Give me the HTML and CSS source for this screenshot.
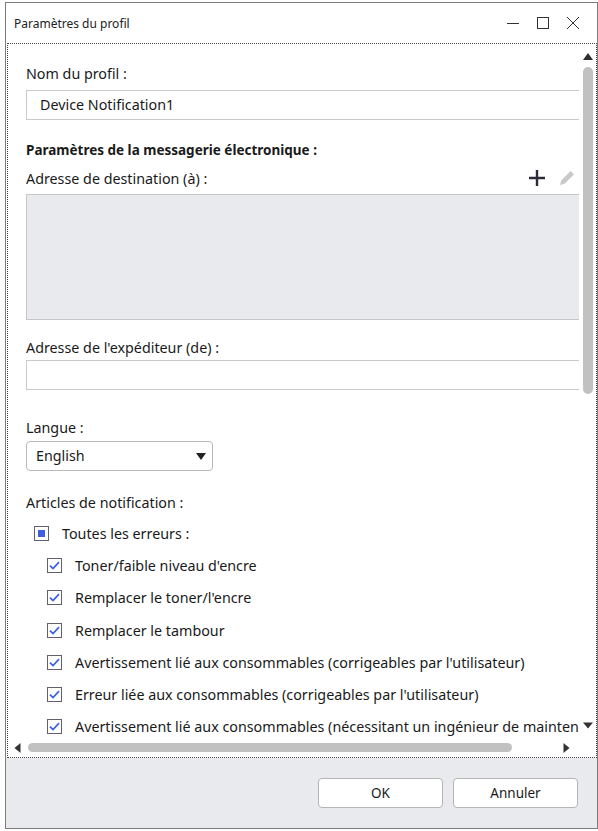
FILE: index.html
```html
<!DOCTYPE html>
<html lang="fr">

<head>
	<title>Paramètres du profil</title>
	<meta charset="utf-8" />
	<meta name="viewport" content="width=device-width, initial-scale=1">
	<link rel="stylesheet" href="styles.css">
</head>

<body>
	<div class="window">
		<div class="titlebar">
			<span class="title">Paramètres du profil</span>
			<div class="caption">
				<span class="cap-btn"><svg width="14" height="14" viewBox="0 0 14 14"><path d="M1 7.5h12" stroke="#333" stroke-width="1"/></svg></span>
				<span class="cap-btn"><svg width="14" height="14" viewBox="0 0 14 14"><rect x="1.5" y="1.5" width="11" height="11" fill="none" stroke="#333" stroke-width="1"/></svg></span>
				<span class="cap-btn"><svg width="14" height="14" viewBox="0 0 14 14"><path d="M1 1l12 12M13 1L1 13" stroke="#333" stroke-width="1"/></svg></span>
			</div>
		</div>

		<div class="panel">
			<div class="viewport">
				<div class="content">
					<div class="lbl">Nom du profil :</div>
					<div class="textbox">Device Notification1</div>

					<div class="section">Paramètres de la messagerie électronique :</div>
					<div class="list-head">
						<span>Adresse de destination (à) :</span>
						<span class="tools">
							<svg class="tool" width="18" height="18" viewBox="0 0 18 18"><path d="M9 1v16M1 9h16" stroke="#2c2c38" stroke-width="2.4"/></svg>
							<svg class="tool" width="18" height="18" viewBox="0 0 18 18"><path d="M2 16l1.2-4.6L12.6 2l3.4 3.4-9.4 9.4z" fill="#c9c9cc"/></svg>
						</span>
					</div>
					<div class="listbox"></div>

					<div class="lbl gap-l">Adresse de l'expéditeur (de) :</div>
					<div class="textbox tight"></div>

					<div class="lbl gap-xl">Langue :</div>
					<div class="combo">English<span class="combo-arrow"></span></div>

					<div class="lbl gap-m">Articles de notification :</div>
					<ul class="checklist">
						<li class="parent"><span class="check partial"></span>Toutes les erreurs :</li>
						<li><span class="check"><svg width="15" height="15" viewBox="0 0 15 15"><path d="M3 7.6l3 3 6-6.4" fill="none" stroke="#3d5ee0" stroke-width="1.7"/></svg></span>Toner/faible niveau d'encre</li>
						<li><span class="check"><svg width="15" height="15" viewBox="0 0 15 15"><path d="M3 7.6l3 3 6-6.4" fill="none" stroke="#3d5ee0" stroke-width="1.7"/></svg></span>Remplacer le toner/l'encre</li>
						<li><span class="check"><svg width="15" height="15" viewBox="0 0 15 15"><path d="M3 7.6l3 3 6-6.4" fill="none" stroke="#3d5ee0" stroke-width="1.7"/></svg></span>Remplacer le tambour</li>
						<li><span class="check"><svg width="15" height="15" viewBox="0 0 15 15"><path d="M3 7.6l3 3 6-6.4" fill="none" stroke="#3d5ee0" stroke-width="1.7"/></svg></span>Avertissement lié aux consommables (corrigeables par l'utilisateur)</li>
						<li><span class="check"><svg width="15" height="15" viewBox="0 0 15 15"><path d="M3 7.6l3 3 6-6.4" fill="none" stroke="#3d5ee0" stroke-width="1.7"/></svg></span>Erreur liée aux consommables (corrigeables par l'utilisateur)</li>
						<li><span class="check"><svg width="15" height="15" viewBox="0 0 15 15"><path d="M3 7.6l3 3 6-6.4" fill="none" stroke="#3d5ee0" stroke-width="1.7"/></svg></span>Avertissement lié aux consommables (nécessitant un ingénieur de maintenance)</li>
					</ul>
				</div>
			</div>

			<!-- scrollbars -->
			<div class="vscroll">
				<span class="tri-up"></span>
				<span class="vthumb"></span>
				<svg class="arrow down" width="10" height="7" viewBox="0 0 10 7"><path d="M0 0.5L5 6.5 10 0.5z" fill="#333"/></svg>
			</div>
			<div class="hscroll">
				<svg class="arrow" width="7" height="10" viewBox="0 0 7 10"><path d="M6.5 0L0.5 5 6.5 10z" fill="#333"/></svg>
				<span class="hthumb"></span>
				<svg class="arrow right" width="7" height="10" viewBox="0 0 7 10"><path d="M0.5 0L6.5 5 0.5 10z" fill="#333"/></svg>
			</div>
			<div class="corner"></div>
		</div>

		<div class="footer">
			<button class="btn">OK</button>
			<button class="btn">Annuler</button>
		</div>
	</div>
</body>

</html>
```

FILE: styles.css
```css
* {
	box-sizing: border-box
}

body,
html {
	margin: 0;
	background-color: white;
	font-family: "Noto Sans", "Open Sans", sans-serif;
	font-size: 14.3px;
	color: #1a1a1a;
}

.window {
	margin: 2px 0 0 5px;
	width: 593px;
	height: 827px;
	border: 1px solid #7c7c7c;
	display: flex;
	flex-direction: column;
}

/* Title bar */
.titlebar {
	height: 40px;
	flex: none;
	display: flex;
	align-items: center;
	padding-left: 8px;
	padding-right: 9px;
}

.title {
	flex: 1;
	font-size: 12px;
	color: #222;
}

.caption {
	display: flex;
}

.cap-btn {
	width: 30px;
	height: 30px;
	display: flex;
	align-items: center;
	justify-content: center;
}

/* Main panel with dotted focus rectangle */
.panel {
	height: 715px;
	flex: none;
	margin-left: 1px;
	border: 1px dotted #444;
	display: grid;
	grid-template-columns: 571px 17px;
	grid-template-rows: 694px 19px;
}

.viewport {
	overflow: hidden;
	min-width: 0;
}

.content {
	width: 571px;
	padding: 20px 0 0 18px;
}

.lbl {
	line-height: 20px;
}

.gap-l {
	margin-top: 18px;
}

.gap-xl {
	margin-top: 28px;
}

.gap-m {
	margin-top: 22px;
}

.textbox {
	width: 570px;
	height: 30px;
	margin-top: 6px;
	border: 1px solid #c9c9c9;
	padding-left: 13px;
	line-height: 28px;
}

.textbox.tight {
	margin-top: 2px;
}

.section {
	margin-top: 20px;
	line-height: 20px;
	font-size: 13.5px;
	font-weight: bold;
}

.list-head {
	margin-top: 8px;
	height: 20px;
	display: flex;
	align-items: center;
	justify-content: space-between;
	padding-right: 3px;
}

.tools {
	display: flex;
	gap: 12px;
}

.tool {
	display: block;
}

.listbox {
	width: 570px;
	height: 126px;
	margin-top: 6px;
	border: 1px solid #c6c6c6;
	background-color: #e9eaee;
}

.combo {
	position: relative;
	width: 187px;
	height: 30px;
	margin-top: 3px;
	border: 1px solid #b9b9b9;
	border-radius: 4px;
	padding-left: 9px;
	line-height: 28px;
}

.combo-arrow {
	position: absolute;
	right: 6px;
	top: 11px;
	border-left: 5.5px solid transparent;
	border-right: 5.5px solid transparent;
	border-top: 7px solid #222;
}

/* Checkbox list */
.checklist {
	list-style: none;
	margin: 4px 0 0 0;
	padding: 0;
}

.checklist li {
	height: 32.3px;
	display: flex;
	align-items: center;
	white-space: nowrap;
	padding-left: 21px;
}

.checklist li.parent {
	padding-left: 8px;
}

.check {
	width: 15px;
	height: 15px;
	margin-right: 13px;
	border: 1px solid #5f6070;
	background-color: white;
	position: relative;
	flex: none;
}

.check svg {
	position: absolute;
	left: -1px;
	top: -1px;
}

.check.partial:after {
	content: "";
	position: absolute;
	left: 3px;
	top: 3px;
	width: 7px;
	height: 7px;
	background-color: #3d5ee0;
}

/* Scrollbars */
.vscroll {
	display: flex;
	flex-direction: column;
	align-items: center;
	padding: 9px 0 9px 0;
	background-color: white;
}

.tri-up {
	display: block;
	flex: none;
	width: 0;
	height: 0;
	border-left: 5px solid transparent;
	border-right: 5px solid transparent;
	border-bottom: 7px solid #2e2e2e;
}

.vthumb {
	width: 10px;
	height: 327px;
	flex: none;
	margin-top: 7px;
	border-radius: 5px;
	background-color: #c1c1c1;
}

.vscroll .down {
	margin-top: auto;
}

.hscroll {
	display: flex;
	align-items: center;
	padding: 0 9px 0 6px;
}

.hthumb {
	width: 484px;
	height: 9px;
	flex: none;
	margin-left: 7px;
	border-radius: 5px;
	background-color: #c1c1c1;
}

.hscroll .right {
	margin-left: auto;
}

.arrow {
	display: block;
	flex: none;
}

/* Footer */
.footer {
	flex: 1;
	background-color: #e9eaee;
	display: flex;
	justify-content: flex-end;
	align-items: flex-start;
	gap: 10px;
	padding: 20px 19px 0 0;
}

.btn {
	width: 125px;
	height: 30px;
	background-color: white;
	border: 1px solid #b5b5b5;
	border-radius: 4px;
	font-family: inherit;
	font-size: 13.5px;
	color: #1a1a1a;
	cursor: pointer;
}
```
